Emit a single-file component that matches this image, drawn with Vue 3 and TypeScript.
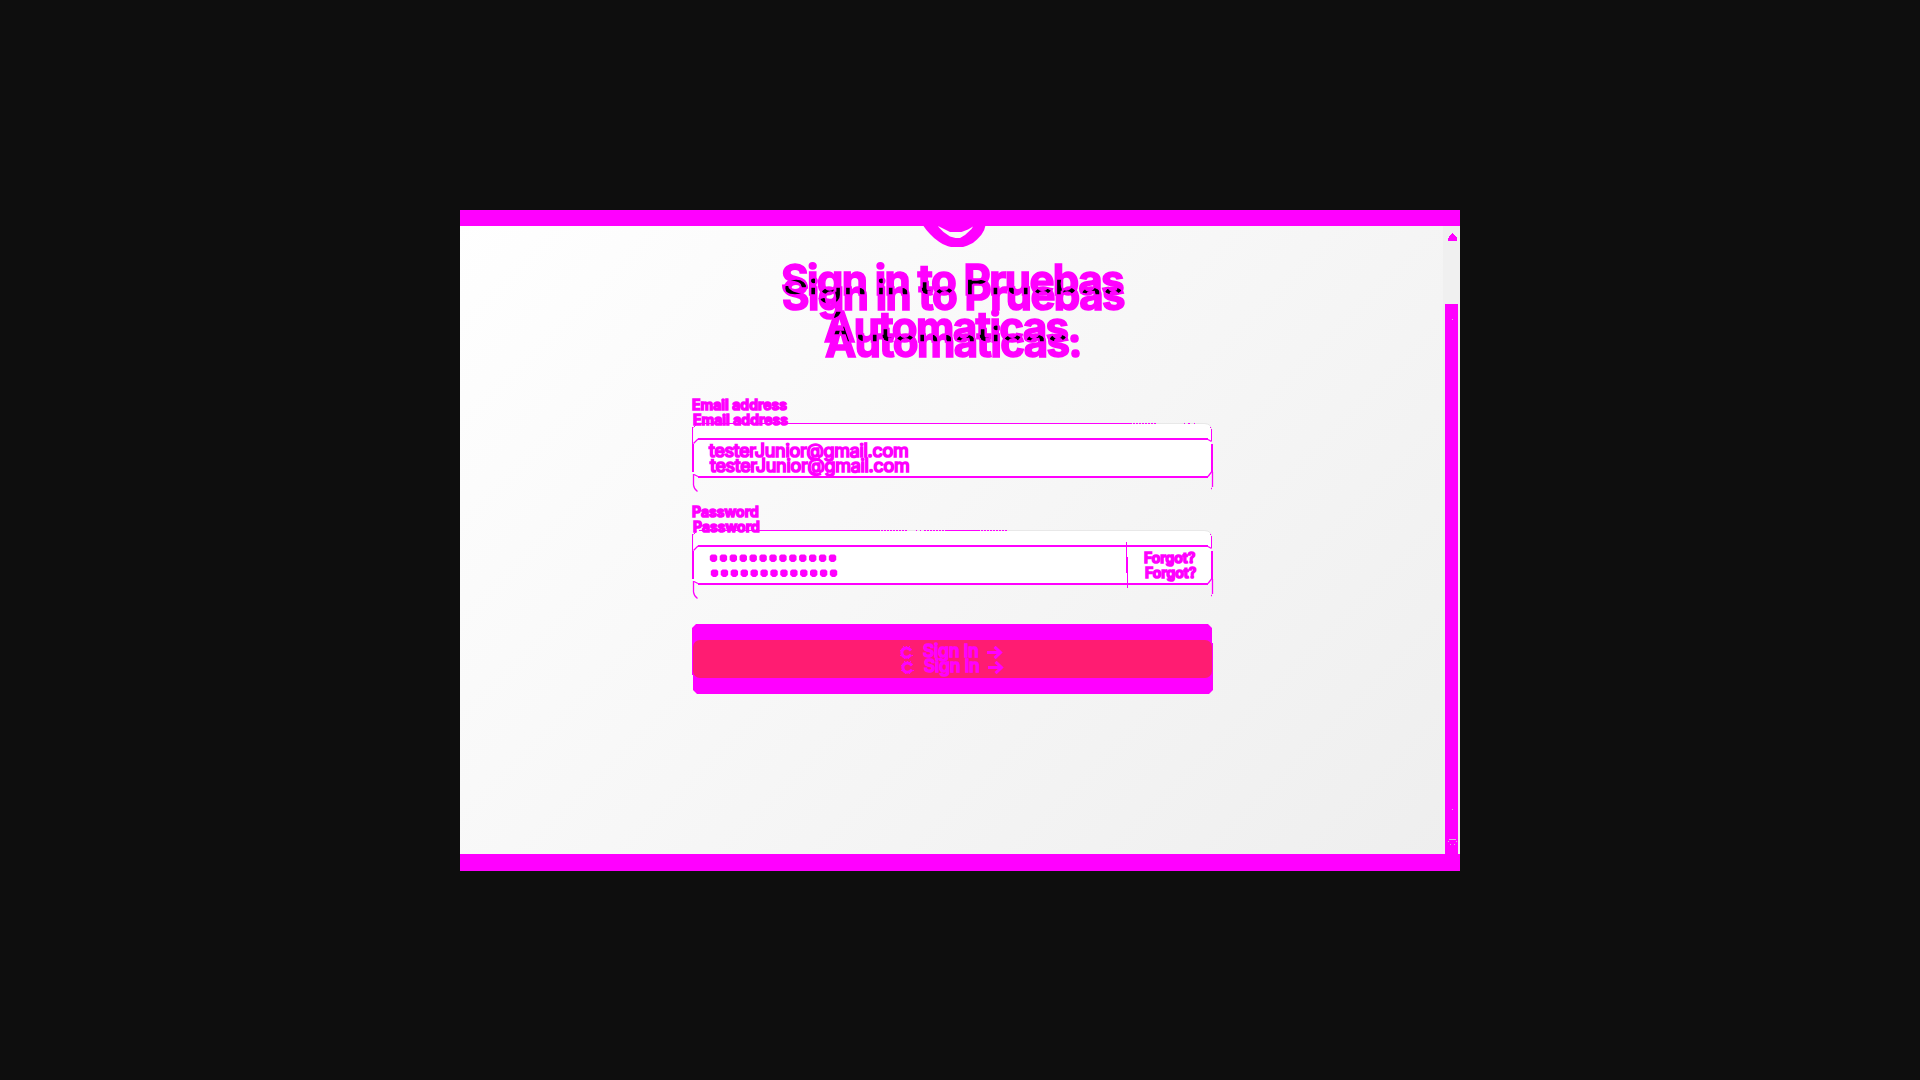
<script setup lang="ts">
const fields = [
  { id: 'email', label: 'Email address', value: 'testerJunior@gmail.com', secret: false },
  { id: 'password', label: 'Password', value: '', secret: true },
]
const layers = [1, 2]
const titleLines = ['Sign in to Pruebas', 'Automaticas.']
const dots = Array.from({ length: 13 }, (_, i) => 4 + i * 9.92)
</script>

<template>
  <main class="stage">
    <section class="panel">
      <div class="band top"></div>
      <div class="body">
        <div class="content">
          <svg class="logo" width="64" height="24" viewBox="0 0 64 24">
            <path fill="#f0f" fill-rule="evenodd" d="M1.500 0Q4 4 8 8 12 12.500 17 15.800 21 19 26 20.200L29 21H41L45 19.800Q51 18 55 13.500 60 9 62.200 4L63.300 0ZM16 0 17 1.500 21.500 6 28 10.500 33.500 12H38L43 9 49.500 3 51 .5 46 3.500 39.500 6H28L20 2Z" />
          </svg>
          <h1 class="title">
            <span v-for="l in layers" :key="l" class="copy" :class="'copy' + l"><span v-for="t in titleLines" :key="t" class="line">{{ t }}</span></span>
            <span class="edge" aria-hidden="true"><i v-for="t in titleLines" :key="t" class="line" :data-t="t"></i></span>
            <span class="edge edge2" aria-hidden="true"><i v-for="t in titleLines" :key="t" class="line" :data-t="t"></i></span>
          </h1>
          <div v-for="f in fields" :key="f.id" class="field">
            <div class="label">{{ f.label }}<span class="ghost">{{ f.label }}</span></div>
            <div class="box">
              <svg class="frame" width="524" height="72" viewBox="0 0 524 72" fill="none" stroke="#f0f">
                <path fill="#fff" stroke="none" d="M7 1H513Q519 1 519 7V53H2V7Q2 1 7 1Z" />
                <path stroke="#e8e8e8" d="M7 .5H512Q519.500 .5 519.500 7" />
                <path v-if="!f.secret" d="M7 .5H440" />
                <path v-if="!f.secret" stroke-dasharray="2 1" d="M441 .5H464M492 .5h1M496 .5h3M502 .5h1" />
                <path v-if="f.secret" d="M7 .5H188M255 .5H288" />
                <path v-if="f.secret" stroke-dasharray="2 1" d="M189 .5H215M224 .5h1M228 .5h1M232 .5H255M289 .5H316" />
                <path d="M4.500 1.500 1.500 4.500M.5 4V21M519.500 6V18M518 4.500h1" />
                <path stroke-width="2" d="M6 16H516M6 54H516M1 21V49M520 21V49" />
                <path stroke-width="1.300" d="M1.500 20.500 6 16M516 16.500 519.500 18.500M516 53.500 519.500 49M1.500 51V62Q2 66 5.500 68.500M520.500 49V64M2 51.500 6 53.500M519 65.500h1" />
                <path v-if="f.secret" d="M434.500 12V43M435.500 27V58" />
                <g v-if="f.secret" fill="#f0f" stroke="none">
                  <template v-for="l in layers" :key="l">
                    <path v-for="x in dots" :key="x" :transform="`translate(${x + 17.500 + l - 1} ${28 + (l - 1) * 15})`" d="M-2-3.500H2L3.700-2V2L1.500 4H-1.500L-3.700 2V-2Z" />
                  </template>
                </g>
              </svg>
              <div v-if="!f.secret" class="value">{{ f.value }}<span class="ghost">{{ f.value }}</span></div>
              <div v-else class="forgot">Forgot?<span class="ghost">Forgot?</span></div>
            </div>
          </div>
          <button class="submit" type="button">
            <span class="overlap"></span>
            <span v-for="l in layers" :key="l" class="caption" :class="'cap' + l">
              <svg class="spin" width="13" height="13" viewBox="0 0 13 13" fill="none" stroke="#f0f">
                <path stroke-width="3" d="M11 4.500Q8.500 1.500 5 2.200 1.500 3 1.800 7 2.500 11 6 11.200 9 11.200 11 8.800" />
                <path stroke-width="1" d="M3 .5h1M6 .5h1M9 .5h1M.5 4v1M.5 9v1M4 12.500h1M8 12.500h1M12.500 9v1" />
              </svg>
              <span class="text">Sign In</span>
              <svg class="arrow" width="16" height="13" viewBox="0 0 16 13" fill="none" stroke="#f0f" stroke-width="3">
                <path d="M0 6.500H13.500M7.500 .8 13.500 6.500 7.500 12.200" />
              </svg>
            </span>
          </button>
        </div>
        <div class="scroll">
          <svg class="up" width="9" height="8" viewBox="0 0 9 8"><path fill="#f0f" d="M4 0H5V1H6V2H7V3H8V4H9V8H0V5H1V3H2V2H3V1H4Z" /></svg>
          <div class="thumb">
            <svg width="13" height="550" viewBox="0 0 13 550" fill="#d9b5d9"><path d="M7 15h1v1h-1zM7 505h1v1h-1zM4 535h7v1h-7zM3 537h1v1h-1zM11 537h1v1h-1zM5 540h1v1h-1zM9 540h1v1h-1z" /></svg>
          </div>
        </div>
      </div>
      <div class="band bottom"></div>
    </section>
  </main>
</template>

<style>
html, body { margin: 0; background: #0e0e0e; }
</style>

<style scoped>
.stage { width: 1920px; height: 1080px; box-sizing: border-box; padding: 210px 460px 0; background: #0e0e0e; font-family: Inter, sans-serif; color: #f0f; overflow: hidden; }
.panel { width: 1000px; height: 661px; background: linear-gradient(135deg, #fff, #eee); display: flex; flex-direction: column; }
.band { height: 16px; background: #f0f; flex: none; }
.band.bottom { height: 17px; }
.body { flex: 1; display: flex; justify-content: space-between; }
.content { width: 521px; margin-left: 232px; display: flex; flex-direction: column; }
.logo { display: block; margin-left: 230px; flex: none; }
.title { position: relative; isolation: isolate; margin: 6px 0 0; height: 137px; width: 520px; text-align: center; font-size: 42px; line-height: 47px; font-weight: 700; letter-spacing: -1.55px; }
.line { display: block; font-style: normal; white-space: nowrap; }
.copy, .edge { position: absolute; left: 0; top: 0; width: 520px; }
.copy2 { left: 1px; top: 15px; mix-blend-mode: difference; }
.edge2 { left: 1px; top: 15px; }
.edge .line::before { content: attr(data-t); color: transparent; -webkit-text-stroke: 1.5px #f0f; }
.field { height: 107px; display: flex; flex-direction: column; flex: none; }
.label { position: relative; z-index: 1; width: max-content; height: 30px; font-size: 14px; line-height: 23px; font-weight: 600; letter-spacing: .05px; -webkit-text-stroke: 1.6px #f0f; }
.ghost { position: absolute; left: 1px; top: 15px; white-space: nowrap; }
.box { position: relative; height: 70px; }
.frame { position: absolute; left: 0; top: 0; }
.value { position: relative; width: max-content; margin-left: 17px; padding-top: 16px; font-size: 18px; line-height: 24px; letter-spacing: -.31px; -webkit-text-stroke: 1.7px #f0f; }
.value .ghost { top: 31px; }
.forgot { position: relative; width: max-content; margin-left: 452px; padding-top: 16px; font-size: 14px; line-height: 23px; font-weight: 600; -webkit-text-stroke: 1.6px #f0f; }
.forgot .ghost { top: 31px; }
.submit { position: relative; flex: none; width: 521px; height: 70px; margin: 17px 0 0; padding: 0; border: 0; background: #f0f; clip-path: polygon(0 4px, 4px 0, 516px 0, 520px 4px, 520px 19px, 521px 19px, 521px 66px, 517px 70px, 5px 70px, 1px 66px, 1px 51px, 0 51px); font-family: inherit; color: #f0f; }
.overlap { position: absolute; left: 1px; top: 16px; width: 519px; height: 38px; border-radius: 7px; background: #ff1c72; }
.caption { position: absolute; left: 208px; top: 16px; display: flex; align-items: center; height: 22px; }
.cap2 { left: 209px; top: 31px; }
.spin, .arrow { flex: none; position: relative; top: 1px; }
.text { margin-left: 10px; width: 57px; font-size: 17.5px; font-weight: 500; line-height: 22px; letter-spacing: -.2px; white-space: nowrap; text-align: left; -webkit-text-stroke: 1.4px #f0f; }
.arrow { margin-left: 7px; }
.scroll { position: relative; width: 17px; background: #f0f0f0; display: flex; flex-direction: column; align-items: flex-start; }
.up { margin: 7px 0 0 5px; }
.thumb { margin: 63px 0 0 2px; width: 13px; height: 550px; background: #f0f; }
</style>
